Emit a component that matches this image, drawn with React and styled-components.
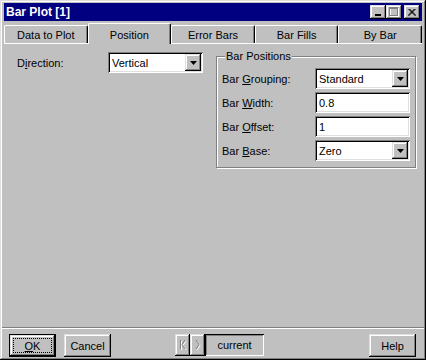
import styled, { createGlobalStyle, css } from "styled-components";

const GlobalStyle = createGlobalStyle`
  body {
    margin: 0;
    background: #c0c0c0;
    font-family: "Liberation Sans", Arial, sans-serif;
    font-size: 11px;
    color: #000;
  }
`;

const raised = css`
  background: #c0c0c0;
  box-shadow: inset -1px -1px #000, inset 1px 1px #dfdfdf,
    inset -2px -2px #808080, inset 2px 2px #fff;
`;

const sunken = css`
  background: #fff;
  box-shadow: inset 1px 1px #808080, inset -1px -1px #fff,
    inset 2px 2px #000, inset -2px -2px #dfdfdf;
`;

const Window = styled.div`
  width: 426px;
  height: 360px;
  box-sizing: border-box;
  padding: 3px 4px 0;
  background: #c0c0c0;
  display: flex;
  flex-direction: column;
  box-shadow: inset -1px -1px #000, inset 1px 1px #dfdfdf,
    inset -2px -2px #808080, inset 2px 2px #fff;
`;

const TitleBar = styled.div`
  height: 18px;
  background: #000080;
  color: #fff;
  display: flex;
  align-items: center;
  padding: 0 2px;
  font-weight: bold;
  font-size: 12px;
`;

const TitleText = styled.span`
  flex: 1;
`;

const CaptionButton = styled.span`
  ${raised};
  width: 16px;
  height: 14px;
  display: flex;
  align-items: center;
  justify-content: center;
  margin-left: ${(p) => (p.$gap ? 2 : 0)}px;
`;

const TabStrip = styled.div`
  display: flex;
  height: 20px;
  margin-top: 2px;
`;

const Tab = styled.div`
  flex: 1;
  position: relative;
  box-sizing: border-box;
  height: ${(p) => (p.$active ? 21 : 18)}px;
  margin-top: ${(p) => (p.$active ? 0 : 2)}px;
  margin-bottom: ${(p) => (p.$active ? -1 : 0)}px;
  z-index: ${(p) => (p.$active ? 1 : 0)};
  background: #c0c0c0;
  border-top: 1px solid #fff;
  border-left: 1px solid #fff;
  border-right: 1px solid #000;
  border-radius: 2px 2px 0 0;
  box-shadow: inset -1px 0 #808080;
  display: flex;
  align-items: center;
  justify-content: center;
  padding-top: ${(p) => (p.$active ? 1 : 0)}px;
`;

const Panel = styled.div`
  flex: 1;
  border-top: 1px solid #fff;
  display: flex;
  align-items: flex-start;
  padding: 8px 0 0 13px;
`;

const FieldRow = styled.div`
  display: flex;
  align-items: center;
`;

const Label = styled.span`
  width: ${(p) => p.$width || 93}px;
  white-space: nowrap;
`;

const Field = styled.div`
  ${sunken};
  width: 95px;
  height: 21px;
  box-sizing: border-box;
  padding: 2px;
  display: flex;
  align-items: center;
`;

const FieldText = styled.span`
  flex: 1;
  padding-left: 2px;
`;

const DropButton = styled.span`
  ${raised};
  width: 16px;
  height: 17px;
  display: flex;
  align-items: center;
  justify-content: center;
`;

const GroupBox = styled.div`
  position: relative;
  margin: 4px 0 0 13px;
  width: 200px;
  box-sizing: border-box;
  border: 1px solid #808080;
  box-shadow: inset 1px 1px #fff, 1px 1px #fff;
  padding: 11px 5px 6px 5px;
  display: grid;
  grid-template-columns: 93px 95px;
  row-gap: 3px;
  align-items: center;
`;

const Legend = styled.span`
  position: absolute;
  top: -7px;
  left: 8px;
  padding: 0 1px;
  line-height: 13px;
  background: #c0c0c0;
`;

const Separator = styled.div`
  border-top: 1px solid #808080;
  border-bottom: 1px solid #fff;
  margin: 0 -2px;
`;

const Footer = styled.div`
  height: 31px;
  box-sizing: border-box;
  padding: 5px 6px 0 5px;
  display: flex;
  align-items: flex-start;
`;

const Button = styled.button`
  ${raised};
  position: relative;
  width: 47px;
  height: 23px;
  border: none;
  padding: 0;
  font: 11px "Liberation Sans", Arial, sans-serif;
  color: #000;
  margin-left: ${(p) => p.$ml || 0}px;
  ${(p) =>
    p.$default &&
    css`
      border: 1px solid #000;
      &::after {
        content: "";
        position: absolute;
        inset: 3px;
        border: 1px dotted #000;
      }
    `}
`;

const NavGroup = styled.div`
  display: flex;
  margin-left: 64px;
`;

const NavButton = styled.span`
  ${raised};
  width: 15px;
  height: 22px;
  display: flex;
  align-items: center;
  justify-content: center;
`;

const Current = styled.span`
  width: 59px;
  height: 22px;
  box-sizing: border-box;
  display: flex;
  align-items: center;
  justify-content: center;
  box-shadow: inset 1px 1px #000, inset -1px -1px #fff,
    inset 2px 2px #808080;
`;

const HelpButton = styled(Button)`
  margin-left: auto;
`;

const DownArrow = () => (
  <svg width="7" height="4" viewBox="0 0 7 4">
    <polygon points="0,0 7,0 3.5,4" fill="#000" />
  </svg>
);

function Select({ value }) {
  return (
    <Field>
      <FieldText>{value}</FieldText>
      <DropButton>
        <DownArrow />
      </DropButton>
    </Field>
  );
}

function TextField({ value }) {
  return (
    <Field>
      <FieldText>{value}</FieldText>
    </Field>
  );
}

const tabs = ["Data to Plot", "Position", "Error Bars", "Bar Fills", "By Bar"];

export default function App() {
  return (
    <>
      <GlobalStyle />
      <Window>
        <TitleBar>
          <TitleText>Bar Plot [1]</TitleText>
          <CaptionButton>
            <svg width="8" height="8" viewBox="0 0 8 8">
              <rect x="1" y="6" width="6" height="2" fill="#000" />
            </svg>
          </CaptionButton>
          <CaptionButton>
            <svg width="10" height="10" viewBox="0 0 10 10">
              <rect x="1.5" y="1.5" width="8" height="8" fill="none" stroke="#fff" />
              <rect x="0.5" y="0.5" width="8" height="8" fill="none" stroke="#808080" />
              <line x1="0" y1="1.5" x2="9" y2="1.5" stroke="#808080" />
            </svg>
          </CaptionButton>
          <CaptionButton $gap>
            <svg width="8" height="7" viewBox="0 0 8 7">
              <path d="M0.5 0 L7.5 7 M1.5 0 L8 6.5 M7.5 0 L0.5 7 M6.5 0 L0 6.5" stroke="#000" strokeWidth="1" />
            </svg>
          </CaptionButton>
        </TitleBar>

        <TabStrip>
          {tabs.map((t) => (
            <Tab key={t} $active={t === "Position"}>
              {t}
            </Tab>
          ))}
        </TabStrip>

        <Panel>
          <FieldRow>
            <Label $width={91}>
              D<u>i</u>rection:
            </Label>
            <Select value="Vertical" />
          </FieldRow>

          <GroupBox>
            <Legend>Bar Positions</Legend>
            <Label>
              Bar <u>G</u>rouping:
            </Label>
            <Select value="Standard" />
            <Label>
              Bar <u>W</u>idth:
            </Label>
            <TextField value="0.8" />
            <Label>
              Bar <u>O</u>ffset:
            </Label>
            <TextField value="1" />
            <Label>
              Bar <u>B</u>ase:
            </Label>
            <Select value="Zero" />
          </GroupBox>
        </Panel>

        <Separator />

        <Footer>
          <Button $default>
            <u>O</u>K
          </Button>
          <Button $ml={8}>Cancel</Button>
          <NavGroup>
            <NavButton>
              <svg width="8" height="10" viewBox="0 0 8 10">
                <g fill="none" stroke="#fff">
                  <line x1="2.5" y1="1" x2="2.5" y2="10" />
                  <polyline points="7,1 4,5.5 7,10" />
                </g>
                <g fill="none" stroke="#808080">
                  <line x1="1.5" y1="0" x2="1.5" y2="9" />
                  <polyline points="6,0 3,4.5 6,9" />
                </g>
              </svg>
            </NavButton>
            <NavButton>
              <svg width="6" height="10" viewBox="0 0 6 10">
                <polyline points="2,1 5,5.5 2,10" fill="none" stroke="#fff" />
                <polyline points="1,0 4,4.5 1,9" fill="none" stroke="#808080" />
              </svg>
            </NavButton>
            <Current>current</Current>
          </NavGroup>
          <HelpButton>Help</HelpButton>
        </Footer>
      </Window>
    </>
  );
}
